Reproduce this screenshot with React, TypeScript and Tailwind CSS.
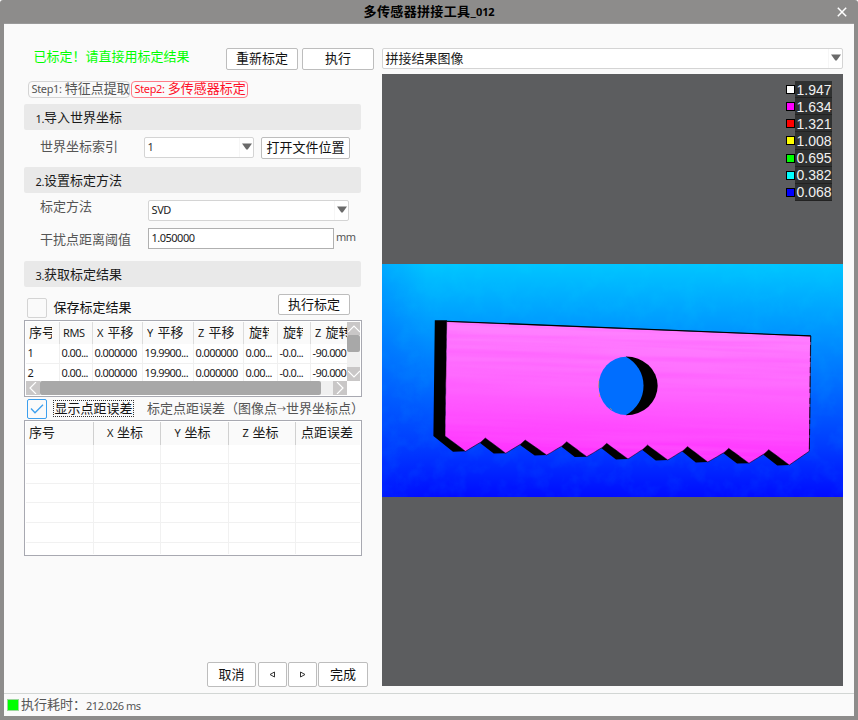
import type { ReactNode } from "react";

const L = ({ children, className = "tracking-[-0.35px]" }: { children: ReactNode; className?: string }) => (
  <span className={"text-[11px] " + className}>{children}</span>
);

const Button = ({ children, className = "" }: { children: ReactNode; className?: string }) => (
  <button
    className={
      "flex shrink-0 items-center justify-center rounded-[2px] border border-[#bdbdbd] bg-white pb-px text-[13px] leading-none text-[#111] " +
      className
    }
  >
    {children}
  </button>
);

const Select = ({ children, className = "" }: { children: ReactNode; className?: string }) => (
  <div className={"flex shrink-0 justify-between rounded-[2px] border border-[#d4d4d4] bg-white " + className}>
    <span className="flex items-center pl-[2.5px]">{children}</span>
    <span className="flex w-[14px] justify-center border-l border-[#f6f6f6] pt-[5px]">
      <svg width="10" height="7" viewBox="0 0 10 7">
        <path d="M0 .5H10L5.7 6.5H4.3Z" fill="#6a6a6a" />
      </svg>
    </span>
  </div>
);

const Section = ({ n, title, className = "" }: { n: string; title: string; className?: string }) => (
  <div
    className={
      "flex h-[26px] w-[337px] items-center rounded-[2px] bg-[#e9e9e9] pl-[11.5px] text-[13px] leading-none text-[#1a1a1a] " +
      className
    }
  >
    <L className="pt-0.5 tracking-[-0.4px]">{n}.</L>
    {title}
  </div>
);

const columns = [
  { w: "w-[34px]", head: "序号", latin: "", pad: "pl-[3px]", clip: "max-w-[23px]" },
  { w: "w-[33px]", head: "", latin: "RMS", pad: "pl-[3px]", clip: "" },
  { w: "w-[50px]", head: "平移", latin: "X", pad: "pl-[4px]", clip: "" },
  { w: "w-[51px]", head: "平移", latin: "Y", pad: "pl-[4px]", clip: "" },
  { w: "w-[50px]", head: "平移", latin: "Z", pad: "pl-[4px]", clip: "" },
  { w: "w-[34px]", head: "旋转", latin: "", pad: "pl-[5px]", clip: "max-w-[20px]" },
  { w: "w-[33px]", head: "旋转", latin: "", pad: "pl-[5px]", clip: "max-w-[20px]" },
  { w: "w-[37px]", head: "旋转", latin: "Z", pad: "pl-[4px]", clip: "" },
];
const rows = [
  ["1", "0.00...", "0.000000", "19.9900...", "0.000000", "0.00...", "-0.0...", "-90.000"],
  ["2", "0.00...", "0.000000", "19.9900...", "0.000000", "0.00...", "-0.0...", "-90.000"],
];

const Chevron = ({ d, className }: { d: string; className: string }) => (
  <span className={"flex shrink-0 items-center justify-center bg-[#c9c7c7] " + className}>
    <svg width="12" height="12" viewBox="0 0 12 12" fill="none" stroke="#fff" strokeWidth="1.2">
      <path d={d} />
    </svg>
  </span>
);

const ResultTable = () => (
  <div className="h-[77px] w-[338px] border border-[#a8a9b1] bg-white p-px">
    <div className="flex h-[59px]">
      <div className="w-[321px] overflow-hidden">
        <div className="flex h-[22px] w-[322px] bg-[#fafafa]">
          {columns.map((c, i) => (
            <div
              key={i}
              className={
                c.w + " " + c.pad +
                " flex shrink-0 items-center overflow-hidden border-r border-[#dcdcdc] pb-px text-[13px] leading-none whitespace-nowrap text-[#1a1a1a]"
              }
            >
              <span className={"flex items-center gap-[4.5px] overflow-hidden " + c.clip}>
                {c.latin && <L>{c.latin}</L>}
                {c.head && <span className="shrink-0">{c.head}</span>}
              </span>
            </div>
          ))}
        </div>
        {rows.map((r, j) => (
          <div key={j} className="flex h-[19.5px] w-[322px] border-b border-[#f0f0f0]">
            {r.map((v, i) => (
              <div
                key={i}
                className={
                  columns[i].w +
                  " flex shrink-0 items-center overflow-hidden border-r border-[#f0f0f0] pb-[1.5px] pl-[1.5px] leading-none whitespace-nowrap text-[#1a1a1a]"
                }
              >
                <L className="tracking-[-0.6px]">{v}</L>
              </div>
            ))}
          </div>
        ))}
      </div>
      <div className="flex w-[13px] flex-col bg-[#f0f0f0]">
        <Chevron d="M0 9L6 3L12 9" className="h-[13px]" />
        <div className="h-[17px] rounded-[2px] bg-[#a8a8a8]" />
        <div className="flex-1" />
        <Chevron d="M0 3L6 9L12 3" className="h-[14px]" />
      </div>
    </div>
    <div className="flex h-[14px] w-[321px] bg-[#f0f0f0]">
      <Chevron d="M9 0L3 6L9 12" className="w-[14px]" />
      <div className="w-[281px] rounded-[2px] bg-[#a8a8a8]" />
      <div className="flex-1" />
      <Chevron d="M3 0L9 6L3 12" className="w-[14px]" />
    </div>
  </div>
);

const errorCols = [
  { w: "w-[68px]", latin: "", head: "序号", a: "justify-start pl-[3px]" },
  { w: "w-[67px]", latin: "X", head: "坐标", a: "justify-center pr-[4px]" },
  { w: "w-[68px]", latin: "Y", head: "坐标", a: "justify-center pr-[4px]" },
  { w: "w-[67px]", latin: "Z", head: "坐标", a: "justify-center pr-[3px]" },
  { w: "w-[64px]", latin: "", head: "点距误差", a: "justify-center pr-[2px]" },
];

const ErrorTable = () => (
  <div className="h-[136px] w-[338px] overflow-hidden border border-[#a8a9b1] bg-white p-px">
    <div className="flex h-[23px] bg-[#fafafa]">
      {errorCols.map((c, i) => (
        <div
          key={i}
          className={
            c.w + " " + c.a +
            " flex shrink-0 items-center gap-[4px] border-r border-[#d0d0d0] pb-[2px] text-[13px] leading-none text-[#1a1a1a] last:border-r-0"
          }
        >
          {c.latin && <L>{c.latin}</L>}
          {c.head}
        </div>
      ))}
    </div>
    {["h-[19px]", "h-[20px]", "h-[19px]", "h-[20px]", "h-[20px]", "h-[11px] border-b-0"].map((h, j) => (
      <div key={j} className={"flex border-b border-[#f1f1f1] " + h}>
        {errorCols.map((c, i) => (
          <div key={i} className={c.w + " shrink-0 border-r border-[#f1f1f1] last:border-r-0"} />
        ))}
      </div>
    ))}
  </div>
);

const legend = [
  ["bg-[#ffffff]", "1.947"],
  ["bg-[#ff00ff]", "1.634"],
  ["bg-[#ff0000]", "1.321"],
  ["bg-[#ffff00]", "1.008"],
  ["bg-[#00ff00]", "0.695"],
  ["bg-[#00ffff]", "0.382"],
  ["bg-[#0000ff]", "0.068"],
];

const tips = [[465.5, 451.3], [505.7, 453.2], [546.7, 455], [586.8, 456.7], [628, 459], [667.8, 460], [707.8, 462], [749, 463.2], [789.3, 465]];
const peaks = [[485.3, 438], [525.2, 440], [566.7, 441.7], [606.7, 443.3], [647.5, 445], [687.5, 446.5], [728.7, 448.3], [768.7, 449.7]];

const teeth = tips
  .map((t, i) => {
    const p = peaks[i];
    return `L${t[0]} ${t[1]}` + (p ? `L${p[0] - 4.6} ${p[1] + 4.2}L${p[0]} ${p[1]}` : "");
  })
  .join("");
const plate = `M446.7 321.5L445 436${teeth}L809.3 451.2L810.8 336Z`;

const DepthMap = () => (
  <svg className="block" width="461" height="233" viewBox="382 264 461 233">
    <defs>
      <linearGradient id="sea" x1="0" y1="0" x2="0" y2="1">
        <stop offset="0" stopColor="#00c5ff" />
        <stop offset=".25" stopColor="#009cff" />
        <stop offset=".5" stopColor="#0070ff" />
        <stop offset=".78" stopColor="#003cff" />
        <stop offset="1" stopColor="#000cff" />
      </linearGradient>
      <linearGradient id="side" x1="0" y1="0" x2="1" y2="0">
        <stop offset="0" stopColor="#0040ff" stopOpacity=".22" />
        <stop offset="1" stopColor="#0040ff" stopOpacity="0" />
      </linearGradient>
      <linearGradient id="plate" gradientUnits="userSpaceOnUse" x1="628" y1="322" x2="623" y2="465">
        <stop offset="0" stopColor="#ff84ff" />
        <stop offset=".45" stopColor="#ff68ff" />
        <stop offset="1" stopColor="#ff2cff" />
      </linearGradient>
      <filter id="mottle" x="0" y="0" width="100%" height="100%">
        <feTurbulence type="fractalNoise" baseFrequency=".06" numOctaves="4" seed="4" />
        <feColorMatrix values="0 0 0 0 0  0 0 0 0 .9  0 0 0 0 1  1.2 0 0 0 -.5" />
      </filter>
      <filter id="streak" x="0" y="0" width="100%" height="100%">
        <feTurbulence type="fractalNoise" baseFrequency=".004 .13" numOctaves="3" seed="8" />
        <feColorMatrix values="0 0 0 0 1  0 0 0 0 .1  0 0 0 0 1  2.8 0 0 0 -1.1" />
      </filter>
      <clipPath id="shape">
        <path d={plate} />
      </clipPath>
    </defs>
    <rect x="382" y="264" width="461" height="233" fill="url(#sea)" />
    <rect x="382" y="264" width="45" height="233" fill="url(#side)" />
    <rect x="382" y="264" width="461" height="233" filter="url(#mottle)" opacity=".12" />
    <path d="M434.8 320.3H447L445 436L465.5 451.3L453 451.8L433.4 436Z" />
    {peaks.map((p, i) => {
      const t = tips[i + 1];
      return <path key={i} d={`M${p[0] - 5.5} ${p[1] + 4.8}L${p[0]} ${p[1] - 0.5}L${t[0]} ${t[1]}L${t[0] - 12} ${t[1] + 0.4}Z`} />;
    })}
    <path d={plate} fill="url(#plate)" stroke="#000" strokeWidth=".6" />
    <g clipPath="url(#shape)">
      <rect x="430" y="310" width="395" height="165" filter="url(#streak)" opacity=".5" transform="rotate(1.5 628 390)" />
    </g>
    <path d="M446.7 321.2L810.8 335.9" stroke="#000" strokeWidth="1.1" />
    <path d="M810.6 336L809.4 451" stroke="#101" strokeWidth=".8" strokeDasharray="6 3 11 2 4 5" />
    <path d="M626 356.4A31.7 29.45 0 0 1 626 415.3Z" />
    <path d="M626 356.7A27.4 29.15 0 0 0 626 415A33 33 0 0 0 626 356.7Z" fill="#006eff" />
    <path d="M598.8 381v7M599.4 394v3M610 408l2 2" stroke="#f4a020" strokeWidth=".8" opacity=".7" />
  </svg>
);

export default function App() {
  return (
    <div className="h-[720px] w-[858px] overflow-hidden bg-white font-['Noto_Sans','Noto_Sans_CJK_SC',sans-serif]">
      <div className="flex h-full flex-col rounded-t-[3px] bg-[#8d8c8b] px-1 pb-1">
        <header className="flex h-6 shrink-0 items-center border-b border-[#9a9a9a]">
          <div className="w-[30px]" />
          <h1 className="flex-1 pb-px text-center text-[13px] leading-none font-bold tracking-[0.35px] text-black">
            多传感器拼接工具_<span className="text-[11px] tracking-[-0.2px]">012</span>
          </h1>
          <svg className="mr-[7px] ml-[13px]" width="10" height="10" viewBox="0 0 10 10" stroke="#fff" strokeWidth="1.5">
            <path d="M.8 .8L9.2 9.2M9.2 .8L.8 9.2" />
          </svg>
        </header>

        <main className="flex h-[669px] shrink-0 bg-[#fafafa] pt-6 pl-5">
          <div className="flex w-[358px] flex-col">
            <div className="flex h-[22px] items-center pl-[9.5px]">
              <div className="w-[192.5px] pb-[5px] text-[13px] leading-none text-[#00ff00]">已标定！请直接用标定结果</div>
              <Button className="h-[22px] w-[72px]">重新标定</Button>
              <Button className="ml-[4px] h-[22px] w-[72px]">执行</Button>
            </div>

            <div className="mt-[11px] flex h-[17px] gap-px pl-[4px] text-[13px] leading-none whitespace-nowrap">
              <div className="flex w-[102px] items-center gap-[3px] rounded-[4px] border border-[#d4d4d4] pb-[2px] pl-[2.5px] text-[#555]">
                <L>Step1:</L>特征点提取
              </div>
              <div className="flex w-[117px] items-center gap-[3px] rounded-[4px] border border-[#ff7c88] pb-[2px] pl-[2.5px] text-[#ff1028]">
                <L>Step2:</L>多传感器标定
              </div>
            </div>

            <Section n="1" title="导入世界坐标" className="mt-[6px]" />
            <div className="mt-[7px] flex h-[22px] pl-4">
              <div className="w-[104px] pt-[2.5px] text-[13px] leading-none text-[#555]">世界坐标索引</div>
              <Select className="h-[21px] w-[110px]"><L className="text-[#333]">1</L></Select>
              <Button className="ml-[7px] h-[22px] w-[89px]">打开文件位置</Button>
            </div>

            <Section n="2" title="设置标定方法" className="mt-[8px]" />
            <div className="mt-[7px] flex h-[21px] pl-4">
              <div className="w-[108px] text-[13px] leading-none text-[#555]">标定方法</div>
              <Select className="h-[21px] w-[201px]"><L className="tracking-[-0.4px] text-[#222]">SVD</L></Select>
            </div>
            <div className="mt-[7px] flex h-[21px] pl-4">
              <div className="w-[108px] pt-[5px] text-[13px] leading-none text-[#555]">干扰点距离阈值</div>
              <div className="flex w-[186px] items-center border border-[#b0b0b0] bg-white pb-[2px] pl-[2.5px] leading-none text-[#222]">
                <L className="tracking-[-0.5px]">1.050000</L>
              </div>
              <L className="pt-[1px] pl-[2px] tracking-[-0.6px] text-[#555]">mm</L>
            </div>

            <Section n="3" title="获取标定结果" className="mt-[12px]" />
            <div className="flex h-[33px] pl-[3px]">
              <div className="mt-[11px] h-[20px] w-[20px] rounded-[2px] border border-[#d4d4d4]" />
              <div className="w-[231px] pt-[14px] pl-[6.5px] text-[13px] leading-none text-[#111]">保存标定结果</div>
              <Button className="mt-[7px] h-[21px] w-[72px]">执行标定</Button>
            </div>
            <ResultTable />
            <div className="flex h-[23px] items-center pl-[3px] text-[13px] leading-none">
              <div className="mt-px flex h-[20px] w-[20px] items-center justify-center rounded-[2px] border border-[#3c9fee]">
                <svg width="14" height="10" viewBox="0 0 14 10" fill="none" stroke="#3c9fee" strokeWidth="1.3">
                  <path d="M1 4.5L5 8.7L13 .8" />
                </svg>
              </div>
              <div className="ml-[6px] flex h-[17px] w-[81px] items-center justify-center border border-dotted border-[#333] text-[#111]">
                显示点距误差
              </div>
              <div className="ml-[13px] flex items-center whitespace-nowrap text-[#555]">
                <span>标定点距误差（图像点</span>
                <span className="flex w-[9px] justify-center text-[9px]">→</span>
                <span>世界坐标点）</span>
              </div>
            </div>
            <ErrorTable />

            <div className="mt-auto mb-[6px] flex h-[25px] gap-px pl-[183px]">
              <Button className="mr-px w-[49px]">取消</Button>
              <Button className="w-[29px]">
                <svg width="7" height="7" viewBox="0 0 7 7" fill="none" stroke="#333"><path d="M5.5 1V6L1 3.5Z" /></svg>
              </Button>
              <Button className="w-[29px]">
                <svg width="7" height="7" viewBox="0 0 7 7" fill="none" stroke="#333"><path d="M1.5 1V6L6 3.5Z" /></svg>
              </Button>
              <Button className="w-[50px]">完成</Button>
            </div>
          </div>

          <div className="flex w-[461px] flex-col">
            <Select className="h-[21px] text-[13px] leading-none text-[#1a1a1a]">拼接结果图像</Select>
            <div className="mt-[5px] flex h-[612px] flex-col bg-[#5c5d5f]">
              <div className="flex h-[190px] flex-col items-end pt-[7px] pr-[11px]">
                {legend.map(([color, value]) => (
                  <div key={value} className="flex h-[17.15px] items-center">
                    <span className={"h-[9px] w-[9px] border border-black " + color} />
                    <span className="flex h-full w-[37px] items-center justify-center border-b border-[#222] bg-[#2f3131] pt-px pl-px font-['Liberation_Sans',sans-serif] text-[14px] leading-none text-[#f0f0f0]">
                      {value}
                    </span>
                  </div>
                ))}
              </div>
              <DepthMap />
            </div>
          </div>
        </main>

        <footer className="flex flex-1 items-center border-t border-[#d2d6d4] bg-[#fafafa] pl-[3px] text-[13px] leading-none text-[#555]">
          <span className="h-[12px] w-[12px] border border-[#9ad89a] bg-[#00ff00]" />
          <span className="ml-[2px] pb-[2px]">执行耗时：</span>
          <L className="tracking-[-0.45px]">212.026 ms</L>
        </footer>
      </div>
    </div>
  );
}
